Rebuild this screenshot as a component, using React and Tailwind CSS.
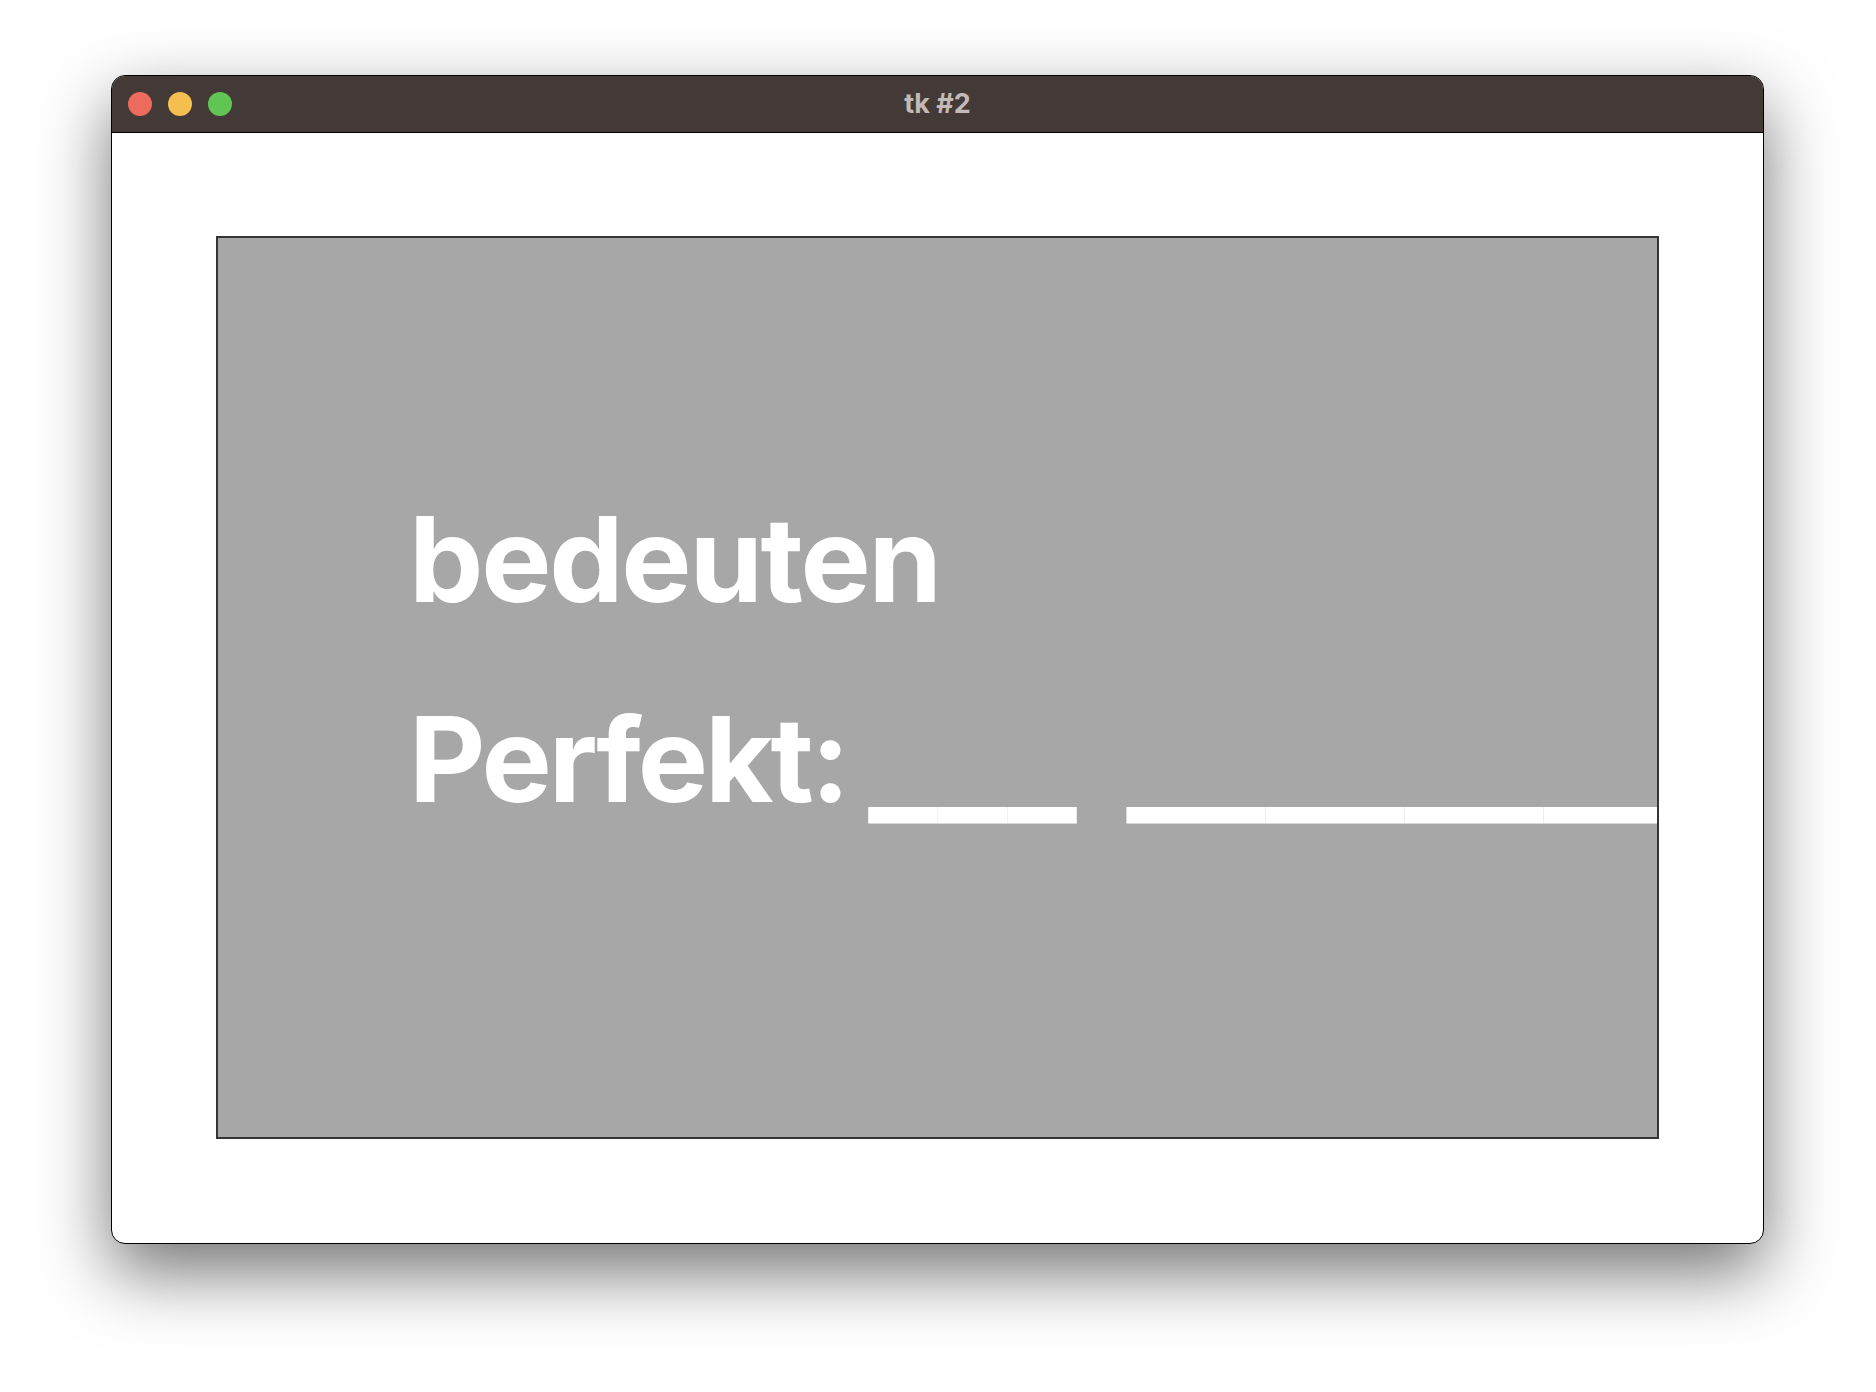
export default function App() {
  return (
    <div className="min-h-screen bg-white pt-[75px] pl-[111px]">
      {/* window */}
      <div className="w-[1653px] h-[1169px] flex flex-col rounded-[14px] border border-black overflow-hidden bg-white shadow-[0_28px_70px_rgba(0,0,0,0.55)]">
        {/* title bar */}
        <div className="relative h-[57px] shrink-0 bg-[#433a38] border-b border-black flex items-center pl-[16px] gap-4">
          <span className="w-6 h-6 rounded-full bg-[#ed6a5e]" />
          <span className="w-6 h-6 rounded-full bg-[#f5bf4f]" />
          <span className="w-6 h-6 rounded-full bg-[#61c554]" />
          <div className="absolute inset-0 flex items-center justify-center text-[27px] font-bold text-[#c3b9b6] font-['Inter',sans-serif]">
            tk #2
          </div>
        </div>

        {/* content */}
        <div className="flex-1 pt-[103px] px-[104px] pb-[104px]">
          <div className="h-full border-2 border-[#353535] bg-[#a7a7a7] overflow-hidden pl-[191px] pt-[221px] font-['Inter',sans-serif] font-bold text-white text-[118px] leading-[200px] tracking-[-0.025em] whitespace-nowrap">
            <div className="tracking-[-0.019em]">bedeuten</div>
            <div>
              Perfekt: <span className="relative top-[5px] ml-[-4px] text-[146px] leading-[0] tracking-normal [word-spacing:15px]">___ ________</span>
            </div>
          </div>
        </div>
      </div>
    </div>
  )
}
